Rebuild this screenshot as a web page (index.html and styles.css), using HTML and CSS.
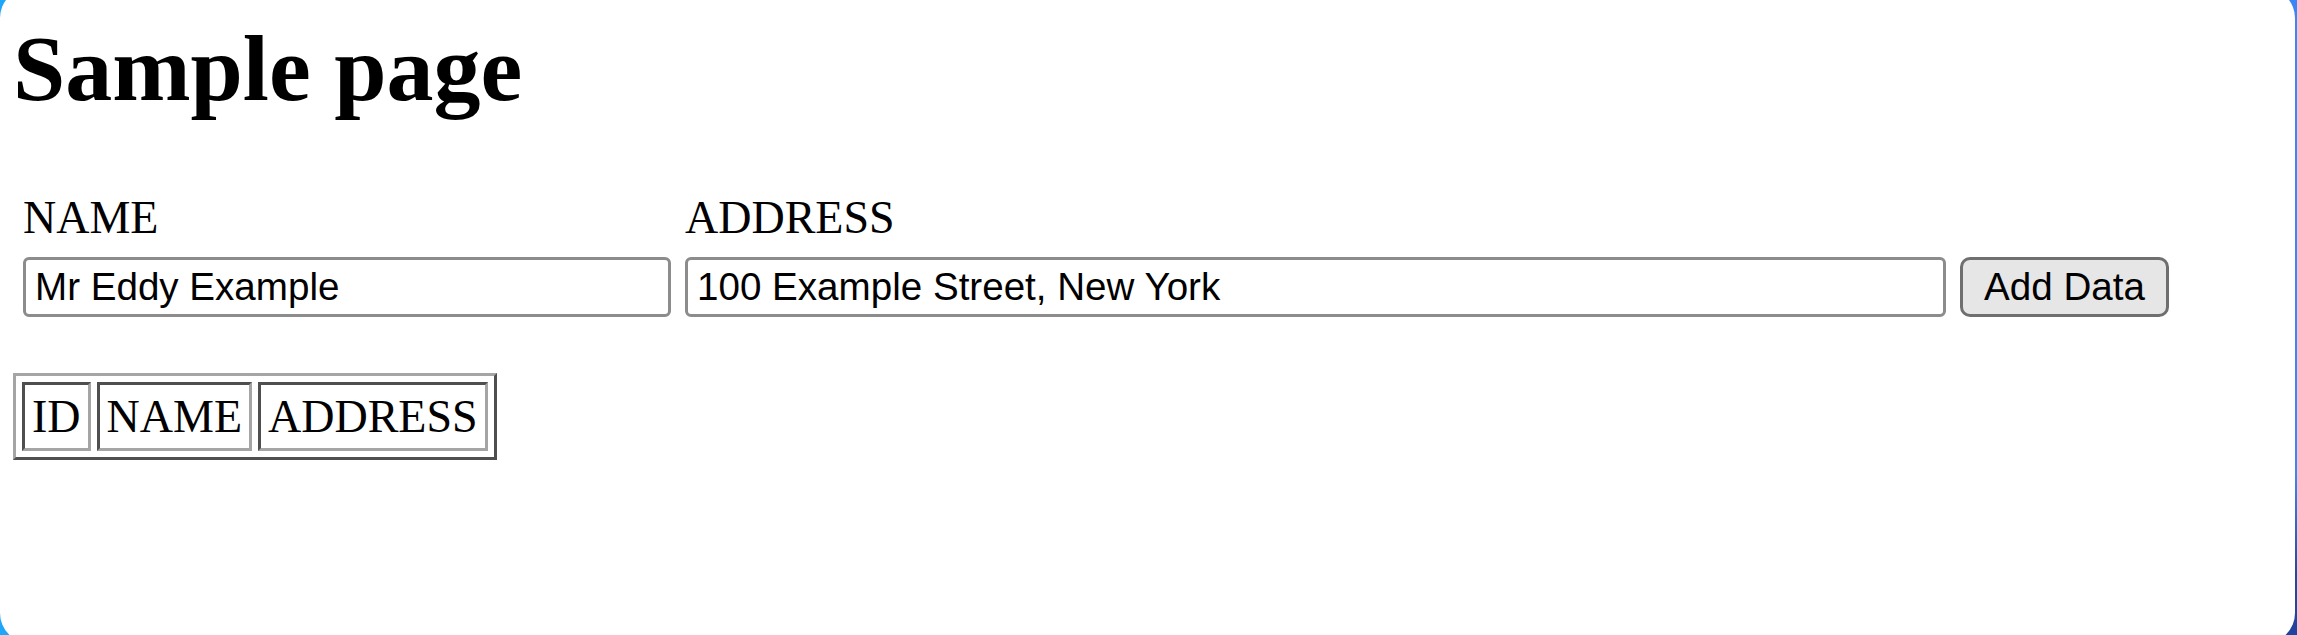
FILE: index.html
```html
<!DOCTYPE html>
<html>
<head>
    <meta charset="utf-8">
    <title>Sample page</title>
    <link rel="stylesheet" href="styles.css">
</head>
<body>
    <div class="window">
        <h1 class="title">Sample page</h1>
        <form class="entry" action="#" method="POST">
            <label class="field-label" for="name">NAME</label>
            <label class="field-label" for="address">ADDRESS</label>
            <span></span>
            <input id="name" type="text" name="name" class="field-input" value="Mr Eddy Example">
            <input id="address" type="text" name="address" class="field-input" value="100 Example Street, New York">
            <button type="button" class="add-button">Add Data</button>
        </form>
        <table class="records">
            <tr>
                <td>ID</td>
                <td>NAME</td>
                <td>ADDRESS</td>
            </tr>
        </table>
    </div>
</body>
</html>
```
FILE: styles.css
```css
html, body
{
margin: 0;
height: 100%;
overflow: hidden;
}
body
{
background:
    radial-gradient(circle at 100% 100%, #2242a0 0, #2546a3 60px, rgba(37,70,163,0) 160px),
    linear-gradient(to right, #1ea7f8, #2f95f7 60%, #3b85f6);
font-family: "Liberation Serif", serif;
color: #000;
}
.window
{
box-sizing: border-box;
height: 655px;
margin: -12px 2px 0 0;
padding: 30px 13px 0;
background: #fff;
border-radius: 30px;
}
.title
{
margin: 0;
font-size: 94px;
line-height: 100px;
font-weight: bold;
}
.entry
{
display: grid;
grid-template-columns: 648px 1261px 209px;
column-gap: 14px;
row-gap: 13px;
margin: 73px 0 56px 10px;
}
.field-label
{
font-size: 46px;
line-height: 53px;
}
.field-input
{
box-sizing: border-box;
height: 60px;
margin: 0;
padding: 0 9px;
font-family: "Liberation Sans", Arial, sans-serif;
font-size: 38.6px;
color: #000;
background: #fff;
border: 3px solid #8c8c8c;
border-radius: 6px;
outline: none;
}
.add-button
{
box-sizing: border-box;
height: 60px;
margin: 0;
padding: 0;
font-family: "Liberation Sans", Arial, sans-serif;
font-size: 38.6px;
color: #000;
background: #e6e6e6;
border: 3px solid #6f6f6f;
border-radius: 10px;
}
.records
{
border-collapse: separate;
border-spacing: 6px;
border: 3px solid;
border-color: #a5a5a5 #4f4f4f #4f4f4f #a5a5a5;
font-size: 46px;
line-height: 53px;
}
.records td
{
padding: 5px 7px;
border: 3px solid;
border-color: #4f4f4f #a5a5a5 #a5a5a5 #4f4f4f;
}
```
